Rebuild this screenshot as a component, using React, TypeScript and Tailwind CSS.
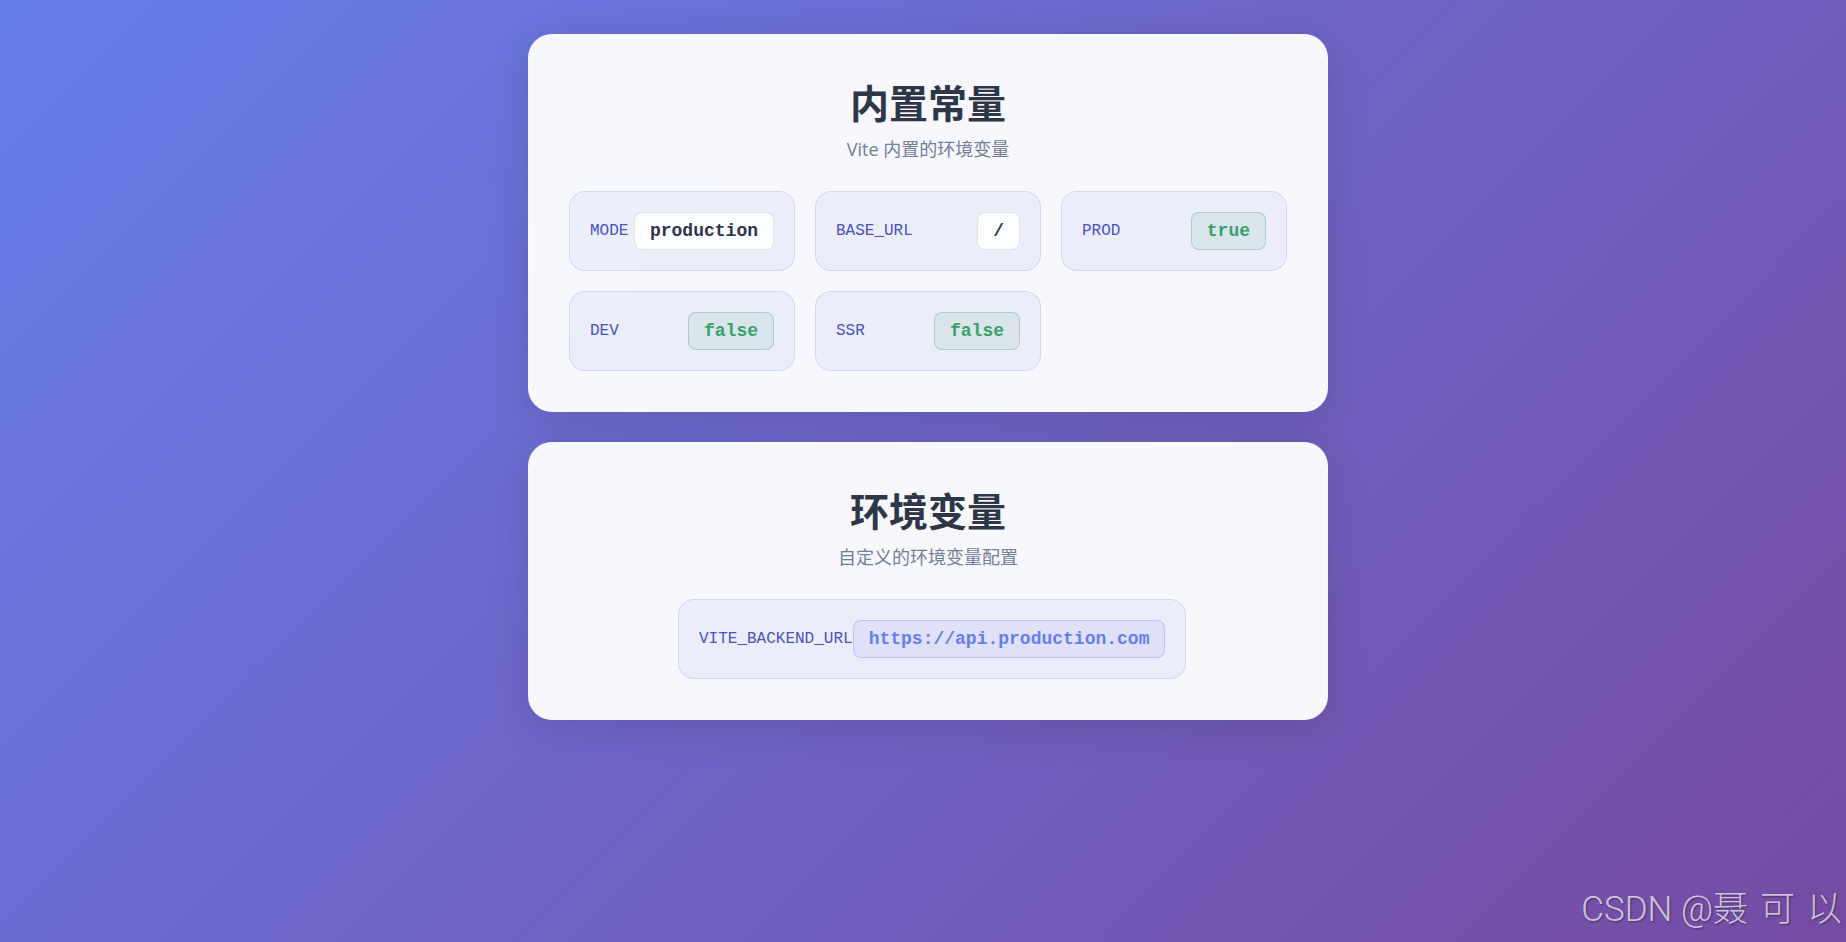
import type { ReactNode } from "react";
import clsx from "clsx";

type Tone = "plain" | "bool" | "url";

interface EnvEntry {
  name: string;
  value: string;
  tone: Tone;
}

const builtins: EnvEntry[] = [
  { name: "MODE", value: "production", tone: "plain" },
  { name: "BASE_URL", value: "/", tone: "plain" },
  { name: "PROD", value: "true", tone: "bool" },
  { name: "DEV", value: "false", tone: "bool" },
  { name: "SSR", value: "false", tone: "bool" },
];

const custom: EnvEntry[] = [
  { name: "VITE_BACKEND_URL", value: "https://api.production.com", tone: "url" },
];

const toneClass: Record<Tone, string> = {
  plain: "bg-white/85 border-black/10 text-[#2d3748]",
  bool: "bg-[#38a169]/10 border-[#38a169]/30 text-[#38a169]",
  url: "bg-[#667eea]/10 border-[#667eea]/30 text-[#667eea]",
};

function EnvItem({ name, value, tone }: EnvEntry) {
  return (
    <div className="flex items-center justify-between rounded-2xl border border-[#667eea]/20 bg-[#667eea]/8 p-5 font-['Courier_New','Liberation_Mono',monospace]">
      <dt className="text-base leading-5 text-[#4c51bf]">{name}</dt>
      <dd
        className={clsx(
          "rounded-lg border px-[15px] py-2 text-lg leading-5 font-bold whitespace-nowrap",
          toneClass[tone]
        )}
      >
        {value}
      </dd>
    </div>
  );
}

function Card({ title, subtitle, children }: { title: string; subtitle: string; children: ReactNode }) {
  return (
    <section className="rounded-3xl border border-white/20 bg-white/95 p-10 shadow-[0_8px_40px_rgba(0,0,0,0.12)]">
      <header className="mb-7 text-center">
        <h1 className="text-[39px] leading-14 font-bold text-[#2d3748]">{title}</h1>
        <p className="mt-1 text-lg leading-7 text-[#718096]">{subtitle}</p>
      </header>
      {children}
    </section>
  );
}

export default function App() {
  return (
    <div
      lang="zh-CN"
      className="relative min-h-screen overflow-hidden bg-linear-[135deg,#667eea_0%,#764ba2_100%] py-[34px] pr-5 pl-[30px] font-['Open_Sans','Noto_Sans_CJK_SC',sans-serif]"
    >
      <main className="mx-auto flex max-w-[800px] flex-col gap-[30px]">
        <Card title="内置常量" subtitle="Vite 内置的环境变量">
          <dl className="grid grid-cols-1 gap-5 md:grid-cols-3">
            {builtins.map((entry) => (
              <EnvItem key={entry.name} {...entry} />
            ))}
          </dl>
        </Card>

        <Card title="环境变量" subtitle="自定义的环境变量配置">
          <dl className="mx-auto grid max-w-[500px] gap-5">
            {custom.map((entry) => (
              <EnvItem key={entry.name} {...entry} />
            ))}
          </dl>
        </Card>
      </main>

      {/* Watermark */}
      <div className="absolute right-1 bottom-1.5 flex gap-3 font-['Roboto','Noto_Sans_CJK_SC',sans-serif] text-[35px] leading-[52px] font-light text-white/70 [text-shadow:1px_1px_2px_rgba(0,0,0,0.4)]">
        <span>CSDN @聂</span>
        <span>可</span>
        <span>以</span>
      </div>
    </div>
  );
}
